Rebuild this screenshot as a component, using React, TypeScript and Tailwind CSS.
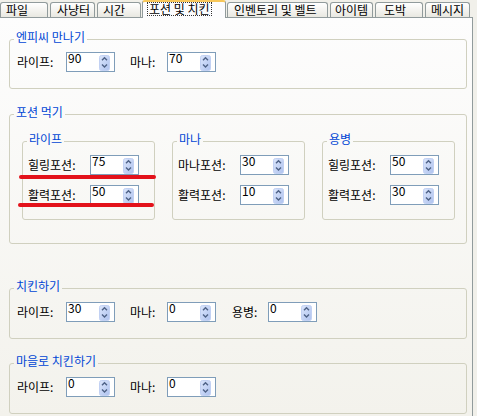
import React from 'react';

const FONT = "font-['Noto_Sans_CJK_KR','Noto_Sans',sans-serif]";

const tabs = [
  { label: '파일', cls: 'w-[48px] pl-[5px]' },
  { label: '사냥터', cls: 'ml-[2px] w-[45px] pl-[6px]' },
  { label: '시간', cls: 'ml-[2px] w-[44px] pl-[5px]' },
  { label: '포션 및 치킨', cls: 'ml-[1px] w-[84px] pl-[4px]', active: true },
  { label: '인벤토리 및 벨트', cls: 'ml-[1px] w-[101px] pl-[6px]' },
  { label: '아이템', cls: 'ml-[2px] w-[43px] pl-[4px]' },
  { label: '도박', cls: 'ml-[2px] w-[48px] pl-[8px]' },
  { label: '메시지', cls: 'ml-[2px] w-[45px] pl-[5px]' },
];

function Spinner() {
  return (
    <svg width="11" height="16" viewBox="0 0 11 16" className="mr-[4px] mt-[2px] shrink-0">
      <defs>
        <linearGradient id="spin" x1="0" y1="0" x2="1" y2="1">
          <stop offset="0" stopColor="#dce6fc" />
          <stop offset="1" stopColor="#aec2ee" />
        </linearGradient>
      </defs>
      <rect x="0.5" y="0.5" width="10" height="15" rx="2" fill="url(#spin)" stroke="#c2d1f3" />
      <path d="M3 5.2 L5.5 2.8 L8 5.2" fill="none" stroke="#4d6185" strokeWidth="1.4" />
      <path d="M3 9.6 L5.5 12 L8 9.6" fill="none" stroke="#4d6185" strokeWidth="1.4" />
    </svg>
  );
}

function NumBox({ value }: { value: string }) {
  return (
    <div className="flex h-[20px] w-[49px] shrink-0 items-start justify-between border border-[#7f9db9] bg-white">
      <span className="pl-[1px] text-[12px] leading-[9px] text-black">{value}</span>
      <Spinner />
    </div>
  );
}

function Field({ label, value, labelCls }: { label: string; value: string; labelCls: string }) {
  return (
    <div className="flex items-center">
      <span className={`${labelCls} shrink-0 text-[12px] leading-[14px] text-black`}>{label}</span>
      <NumBox value={value} />
    </div>
  );
}

function GroupBox({ title, className, children }: { title: string; className: string; children: React.ReactNode }) {
  return (
    <fieldset className={`min-w-0 rounded-[3px] border border-[#d0d0bf] ${className}`}>
      <legend className="ml-[4px] px-[2px] pb-[4px] text-[12px] leading-[14px] text-[#0046d5]">{title}</legend>
      {children}
    </fieldset>
  );
}

function PotionBox({ title, rows }: { title: string; rows: [string, string][] }) {
  return (
    <GroupBox title={title} className="w-[133px]">
      <div className="flex flex-col gap-[10px] pb-[14px] pl-[5px] pt-[5px]">
        {rows.map(([label, value]) => (
          <Field key={label} label={label} value={value} labelCls="w-[62px]" />
        ))}
      </div>
    </GroupBox>
  );
}

export default function App() {
  return (
    <div className={`relative h-[416px] w-[477px] overflow-hidden bg-[#f1f0ea] ${FONT}`}>
      {/* tab strip */}
      <div className="flex h-[17px] items-end">
        {tabs.map((t) =>
          t.active ? (
            <div
              key={t.label}
              className={`${t.cls} relative z-10 -mb-[1px] flex h-[18px] items-start rounded-t-[3px] border-x border-t-2 border-x-[#919b9c] border-t-[#f7c75a] bg-[#fcfcfe] pt-[0px]`}
            >
              <span className="whitespace-nowrap border border-dotted border-[#333] px-[1px] text-[12px] leading-[12px] text-black">
                {t.label}
              </span>
            </div>
          ) : (
            <div
              key={t.label}
              className={`${t.cls} flex h-[15px] items-center rounded-t-[3px] border-x border-t border-[#919b9c] bg-gradient-to-b from-white to-[#e9e8e1]`}
            >
              <span className="whitespace-nowrap text-[12px] leading-[14px] text-black">{t.label}</span>
            </div>
          )
        )}
      </div>

      {/* tab page */}
      <div className="h-[399px] w-[473px] border-r border-t border-[#919b9c] bg-gradient-to-b from-[#fdfdfd] to-[#f3f2ec] pl-[9px] pt-[12px]">
        <GroupBox title="엔피씨 만나기" className="w-[458px]">
          <div className="flex items-center pb-[16px] pl-[7px] pt-[4px]">
            <Field label="라이프:" value="90" labelCls="w-[49px]" />
            <div className="ml-[15px]">
              <Field label="마나:" value="70" labelCls="w-[37px]" />
            </div>
          </div>
        </GroupBox>

        <GroupBox title="포션 먹기" className="mt-[16px] w-[458px]">
          <div className="flex gap-[17px] pb-[23px] pl-[12px] pt-[9px]">
            <PotionBox title="라이프" rows={[['힐링포션:', '75'], ['활력포션:', '50']]} />
            <PotionBox title="마나" rows={[['마나포션:', '30'], ['활력포션:', '10']]} />
            <PotionBox title="용병" rows={[['힐링포션:', '50'], ['활력포션:', '30']]} />
          </div>
        </GroupBox>

        <GroupBox title="치킨하기" className="mt-[35px] w-[458px]">
          <div className="flex items-center pb-[16px] pl-[7px] pt-[5px]">
            <Field label="라이프:" value="30" labelCls="w-[49px]" />
            <div className="ml-[15px]">
              <Field label="마나:" value="0" labelCls="w-[37px]" />
            </div>
            <div className="ml-[16px]">
              <Field label="용병:" value="0" labelCls="w-[36px]" />
            </div>
          </div>
        </GroupBox>

        <GroupBox title="마을로 치킨하기" className="mt-[15px] w-[458px]">
          <div className="flex items-center pb-[16px] pl-[7px] pt-[5px]">
            <Field label="라이프:" value="0" labelCls="w-[49px]" />
            <div className="ml-[15px]">
              <Field label="마나:" value="0" labelCls="w-[37px]" />
            </div>
          </div>
        </GroupBox>
      </div>

      {/* red marker underlines drawn over the screenshot */}
      <div className="absolute left-[19px] top-[175px] h-[4px] w-[137px] rounded-full bg-[#e3121b]" />
      <div className="absolute left-[18px] top-[203px] h-[4px] w-[136px] rounded-full bg-[#e3121b]" />
    </div>
  );
}
